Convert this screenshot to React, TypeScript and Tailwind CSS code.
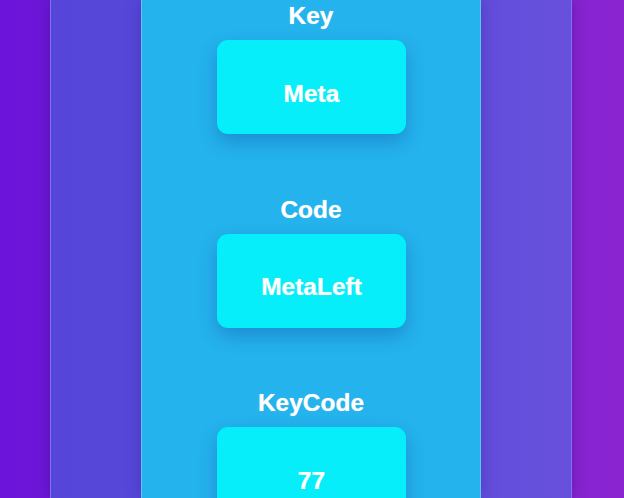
import React from 'react';

// key event info panel
const fields = [
  { label: 'Key', value: 'Meta' },
  { label: 'Code', value: 'MetaLeft' },
  { label: 'KeyCode', value: '77' },
];

export default function App() {
  return (
    <div
      className="h-[498px] w-full overflow-hidden flex pl-[50px] bg-gradient-to-r from-[#6c15da] to-[#8a24d1]"
      style={{ fontFamily: '"Liberation Sans", Arial, sans-serif' }}
    >
      <div className="w-[522px] h-full flex justify-center bg-gradient-to-r from-[#5546d9] to-[#6650dc] border-x border-[#7f72ea] shadow-[0_0_14px_rgba(40,0,110,0.35)]">
        <div className="w-[340px] h-full bg-[#24b3ec] border-x border-[#5ec6f6] shadow-[0_0_16px_rgba(40,20,140,0.35)] flex flex-col items-center pt-[2px] gap-[61.5px]">
          {fields.map((f) => (
            <div key={f.label} className="flex flex-col items-center">
              <div className="h-7 leading-7 text-[24.5px] font-bold text-white mb-[10px] [text-shadow:0_0_1px_rgba(255,255,255,0.6)]">{f.label}</div>
              <div className="w-[189px] h-[94px] rounded-[11px] bg-[#05eef9] shadow-[0_8px_18px_rgba(20,60,160,0.32)] flex items-center justify-center pt-[13px] ml-[1px]">
                <span className="text-[24.5px] leading-7 font-bold text-white [text-shadow:0_0_1px_rgba(255,255,255,0.6)]">{f.value}</span>
              </div>
            </div>
          ))}
        </div>
      </div>
    </div>
  );
}
